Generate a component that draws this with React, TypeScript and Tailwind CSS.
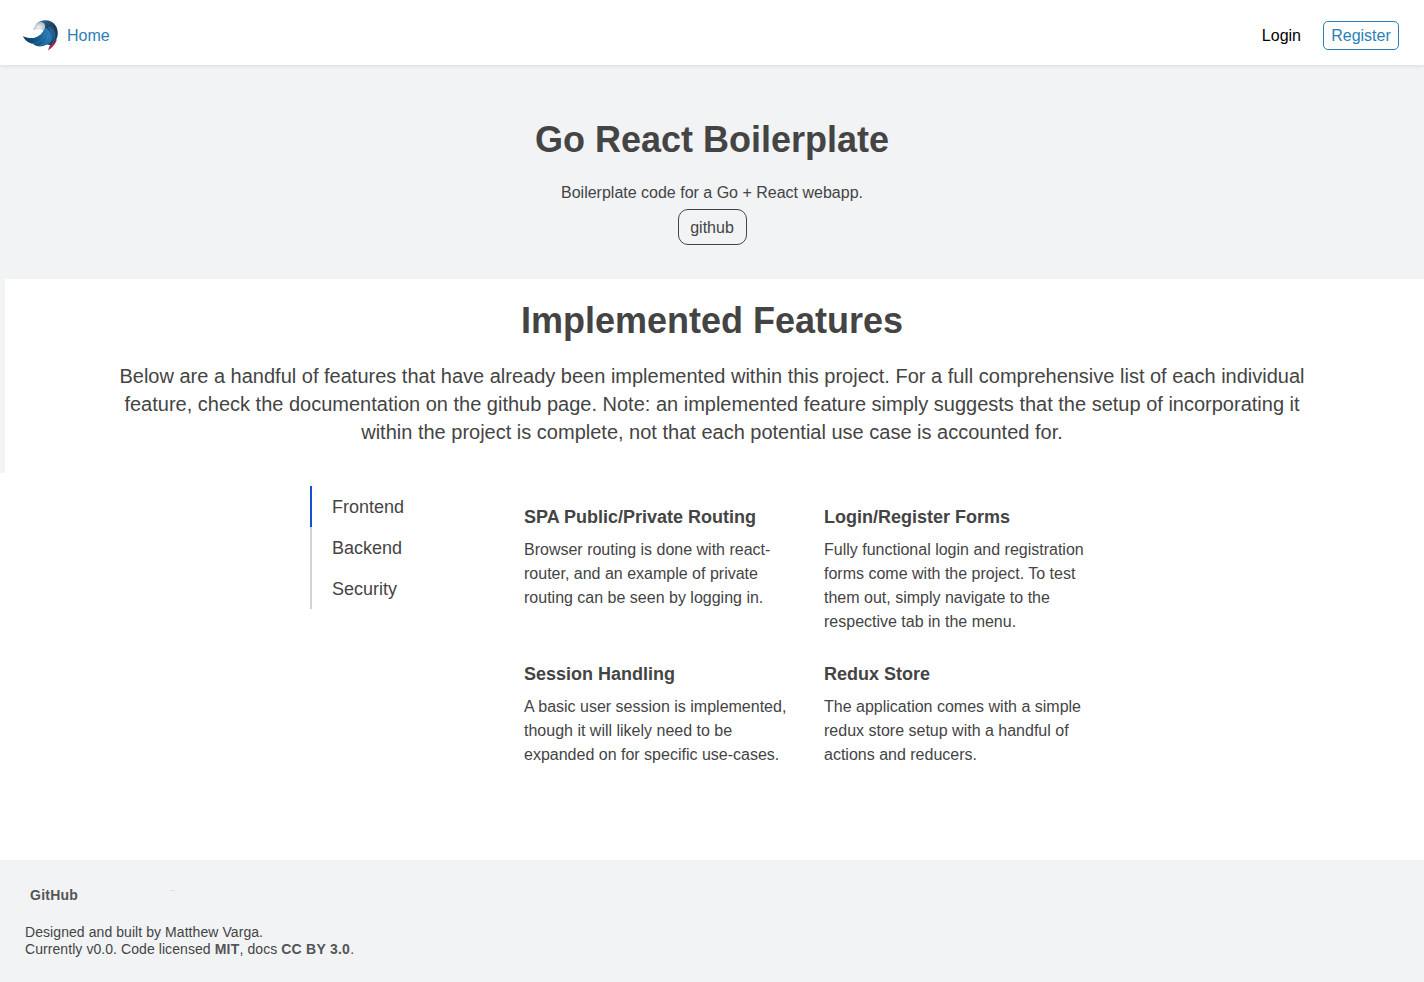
import React from "react";

type Feature = { title: string; lines: string[] };

const features: Feature[] = [
  {
    title: "SPA Public/Private Routing",
    lines: ["Browser routing is done with react-", "router, and an example of private", "routing can be seen by logging in."],
  },
  {
    title: "Login/Register Forms",
    lines: [
      "Fully functional login and registration",
      "forms come with the project. To test",
      "them out, simply navigate to the",
      "respective tab in the menu.",
    ],
  },
  {
    title: "Session Handling",
    lines: ["A basic user session is implemented,", "though it will likely need to be", "expanded on for specific use-cases."],
  },
  {
    title: "Redux Store",
    lines: ["The application comes with a simple", "redux store setup with a handful of", "actions and reducers."],
  },
];

const intro = [
  "Below are a handful of features that have already been implemented within this project. For a full comprehensive list of each individual",
  "feature, check the documentation on the github page. Note: an implemented feature simply suggests that the setup of incorporating it",
  "within the project is complete, not that each potential use case is accounted for.",
];

const tabs = ["Frontend", "Backend", "Security"];

function Lines({ lines }: { lines: string[] }) {
  return (
    <>
      {lines.map((line) => (
        <span key={line} className="block whitespace-nowrap">
          {line}
        </span>
      ))}
    </>
  );
}

function Logo() {
  return (
    <svg className="h-8 w-9 shrink-0" viewBox="0 0 36 32" aria-hidden="true">
      <defs>
        <linearGradient id="crest" x1="0.2" y1="0" x2="1" y2="1">
          <stop offset="0" stopColor="#3a668b" />
          <stop offset="0.45" stopColor="#173c5c" />
          <stop offset="1" stopColor="#123b61" />
        </linearGradient>
        <linearGradient id="wing" x1="0" y1="0.5" x2="1" y2="0.2">
          <stop offset="0" stopColor="#0b3a63" />
          <stop offset="0.5" stopColor="#155e92" />
          <stop offset="1" stopColor="#3183bd" />
        </linearGradient>
        <radialGradient id="face" cx="0.5" cy="0.6" r="0.6">
          <stop offset="0" stopColor="#f1f2f5" />
          <stop offset="1" stopColor="#a5b3c2" />
        </radialGradient>
        <linearGradient id="tail" x1="1" y1="0" x2="0" y2="1">
          <stop offset="0" stopColor="#e8282b" />
          <stop offset="0.5" stopColor="#c51d42" />
          <stop offset="1" stopColor="#8b237c" />
        </linearGradient>
      </defs>
      <path d="M33.8 19.5C33.2 23 31 26 25 30.5C26.3 27 26.5 25 28.5 22.5Z" fill="url(#tail)" />
      <path d="M13 4.5C15.5 1.5 19 .2 22.5 .2C30 .2 34.8 6 34.8 13C34.8 17.5 33 21 30 24C25 27 19 23 19 16C19 12 22 10 21.5 6Z" fill="url(#crest)" />
      <path d="M0 16C5 18.8 11 18.7 15 16.2C19 14 20.5 11.5 21.5 7.5C27 9 29 15 27.5 20C25.5 25 20 27 15 26.3C12.5 25.8 11 25 10 23.8C5 23 1.5 20 0 16Z" fill="url(#wing)" />
      <path d="M25 7C29.5 12 29.5 18 25.5 24.5C30 22 33 15 30 10C28.5 8 27 7 25 7Z" fill="#215f92" />
      <path d="M10 23.8C16 23 20 20 22.5 13M15 26.2C21 25 25 21 25 14M25 7C30 12 29 20 25 25M28 6C34 13 32 20 29 24" fill="none" stroke="#4994c6" strokeWidth=".45" />
      <path d="M10 10.3C11.5 8.5 11.2 6 13 4C15.5 1.5 19 1.3 21 3.2C22.7 5 22.5 8 20.5 10.8C18 8.7 14 8.5 10 10.3Z" fill="url(#face)" />
    </svg>
  );
}

export default function App() {
  return (
    <div className="flex h-[982px] w-full flex-col overflow-hidden bg-white font-['Liberation_Sans',Arial,sans-serif] text-base text-[#444]">
      <header className="relative z-10 flex h-[65px] shrink-0 items-center justify-between bg-white pt-[5px] pr-[25px] pl-[23px] shadow-[0_1px_4px_rgba(0,0,0,0.1)]">
        <nav className="flex items-center gap-2 pt-px">
          <Logo />
          <a className="pt-px text-[#2980b9]">Home</a>
        </nav>
        <nav className="flex items-center gap-[22px]">
          <a className="pt-px text-black">Login</a>
          <a className="flex h-[29px] w-[76px] items-center justify-center rounded-[5px] border border-[#2980b9] pt-px text-[#2980b9]">
            Register
          </a>
        </nav>
      </header>

      <section className="flex h-[214px] shrink-0 flex-col items-center bg-[#f1f3f5] pt-[54px]">
        <h1 className="text-4xl leading-[42px] font-bold">Go React Boilerplate</h1>
        <p className="mt-5 leading-6">Boilerplate code for a Go + React webapp.</p>
        <a className="mt-1 flex h-9 w-[69px] items-center justify-center rounded-[10px] border border-[#444] pt-px">github</a>
      </section>

      <section className="flex h-[194px] shrink-0 flex-col items-center border-l-[5px] border-[#f1f3f5] pt-[21px] pr-[5px] text-center">
        <h2 className="text-4xl leading-[42px] font-bold">Implemented Features</h2>
        <p className="mt-5 text-xl leading-7">
          <Lines lines={intro} />
        </p>
      </section>

      <section className="flex h-[387px] shrink-0 pt-[13px] pl-[310px]">
        <ul className="w-[214px] text-lg">
          {tabs.map((tab, i) => (
            <li
              key={tab}
              className={`flex h-[41px] items-center border-l-2 pl-5 ${i === 0 ? "border-[#1551d1]" : "border-[#d3d3d3]"}`}
            >
              {tab}
            </li>
          ))}
        </ul>
        <div className="grid grid-cols-[300px_300px] grid-rows-[157px_157px] pt-[18px]">
          {features.map((f) => (
            <article key={f.title}>
              <h3 className="text-lg leading-[26px] font-bold">{f.title}</h3>
              <p className="mt-2 leading-6">
                <Lines lines={f.lines} />
              </p>
            </article>
          ))}
        </div>
      </section>

      <footer className="h-[122px] shrink-0 bg-[#f1f3f5] px-[25px] pt-[27px] text-sm leading-[17px] tracking-[0.07px]">
        <div className="flex pl-[5px]">
          <a className="w-[140px] font-bold tracking-[0.25px] text-[#555]">GitHub</a>
          <span className="mt-[3px] h-px w-[5px] bg-[#dcdee0]" />
        </div>
        <p className="mt-5">
          Designed and built by Matthew Varga.
          <br />
          Currently v0.0. Code licensed <b className="tracking-[0.25px] text-[#555]">MIT</b>, docs{" "}
          <b className="tracking-[0.25px] text-[#555]">CC BY 3.0</b>.
        </p>
      </footer>
    </div>
  );
}
